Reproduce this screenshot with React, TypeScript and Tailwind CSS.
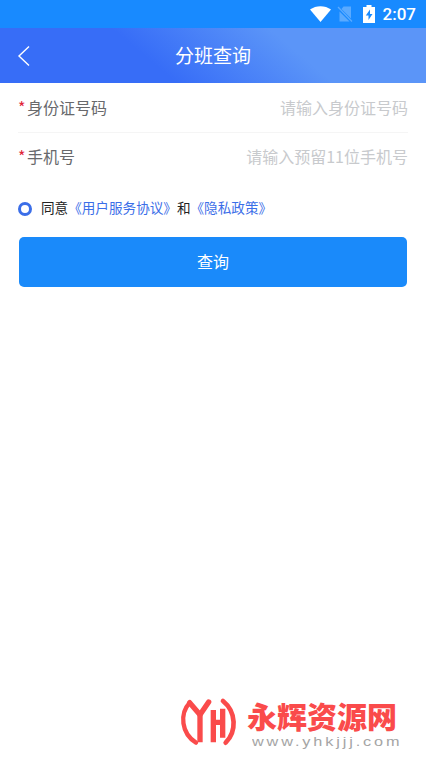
import type { ReactNode } from "react";

function StatusBar() {
  return (
    <div className="flex h-7 items-center justify-end bg-[#188aff] pr-[9px] text-white">
      <svg width="21" height="16" viewBox="0 0 21 16" className="mr-[6px]">
        <path d="M0 3.5C6-1 15-1 21 3.5L10.5 16Z" fill="currentColor" />
      </svg>
      <svg width="16" height="18" viewBox="0 0 16 18" className="mr-[10px]">
        <path d="M6.5 1.5H14v12L4.5 4Z" fill="#5aaaff" />
        <path d="M2.5 6.5v10h10Z" fill="#5aaaff" />
        <path d="M1 2l14 14.5" stroke="#5aaaff" strokeWidth="1.3" />
      </svg>
      <svg width="12" height="18" viewBox="0 0 12 18" className="mr-[8px]">
        <path d="M3.5 0h5v2H12v16H0V2h3.5Z" fill="currentColor" />
        <path d="M7 4.5 2.8 10.5h2.7V15l4-6H7Z" fill="#188aff" />
      </svg>
      <span className="mr-px font-[Roboto,sans-serif] text-[17px] font-medium leading-7">
        2:07
      </span>
    </div>
  );
}

function Header() {
  return (
    <header className="grid h-[55px] grid-cols-[1fr_auto_1fr] items-center bg-[linear-gradient(40deg,#376df7_0%,#376df7_36%,#5b95f8_68%,#5b95f8_100%)] text-white">
      <button type="button" className="pl-[17px]">
        <svg
          width="13"
          height="22"
          viewBox="0 0 13 22"
          fill="none"
          stroke="currentColor"
          strokeWidth="1.4"
        >
          <path d="M12 1.5 2 11l10 9.5" />
        </svg>
      </button>
      <h1 className="text-[19px]">分班查询</h1>
    </header>
  );
}

function Field({ label, placeholder }: { label: string; placeholder: string }) {
  return (
    <label className="flex h-12 items-center text-base text-[#68696c]">
      <span className="mr-[2px] w-[7px] text-[#e02438]">*</span>
      <span className="shrink-0">{label}</span>
      <input
        className="min-w-0 flex-1 bg-transparent text-right placeholder:text-[#c8cacd]"
        placeholder={placeholder}
      />
    </label>
  );
}

function Agreement({ children }: { children: ReactNode }) {
  return <a className="text-[#3b6ee8]">{children}</a>;
}

function Watermark() {
  return (
    <div className="mt-auto flex h-[65px] pl-[176px]">
      <svg
        width="64"
        height="60"
        viewBox="0 0 192 180"
        fill="none"
        stroke="#fa4b4b"
        strokeWidth="16"
        strokeLinecap="round"
        strokeLinejoin="round"
        className="shrink-0"
      >
        <path d="M41 32C10 65 16 125 60 152" strokeWidth="13" />
        <path d="M41 32 72 68M98 30 72 68" />
        <path d="M72 64V151M112 54V151M112 91H140M140 50V137" strokeLinecap="butt" />
        <path d="M141 27C182 60 182 120 149 152" strokeWidth="14" />
      </svg>
      <div className="ml-[7px] whitespace-nowrap">
        <div className="mt-[9px] h-8 text-[30px] font-black leading-[29px] text-[#fa4b4b]">
          永辉资源网
        </div>
        <svg width="160" height="20" className="ml-[5px]">
          <text
            x="0"
            y="13"
            textLength="118"
            transform="scale(1.25 1)"
            fill="#a5a5a5"
            className="font-['Liberation_Sans',sans-serif] text-[13px]"
          >
            www.yhkjjj.com
          </text>
        </svg>
      </div>
    </div>
  );
}

export default function App() {
  return (
    <div className="flex h-screen flex-col overflow-hidden bg-white font-['Noto_Sans_CJK_SC',sans-serif]">
      <StatusBar />
      <Header />
      <main className="px-[18px]">
        <Field label="身份证号码" placeholder="请输入身份证号码" />
        <div className="mt-px -mb-px h-px bg-[#f5f5f5]" />
        <Field label="手机号" placeholder="请输入预留11位手机号" />
        <div className="mt-[17px] flex h-5 items-center text-[13.6px] text-[#222]">
          <span className="mr-[9px] mt-[3px] size-[14px] rounded-full border-[3.5px] border-[#3b6ee8]" />
          同意<Agreement>《用户服务协议》</Agreement>和
          <Agreement>《隐私政策》</Agreement>
        </div>
        <button
          type="button"
          className="ml-px mt-5 block h-[50px] w-[388px] rounded-[5px] bg-[#1a8afa] pb-0.5 text-base text-white"
        >
          查询
        </button>
      </main>
      <Watermark />
    </div>
  );
}
